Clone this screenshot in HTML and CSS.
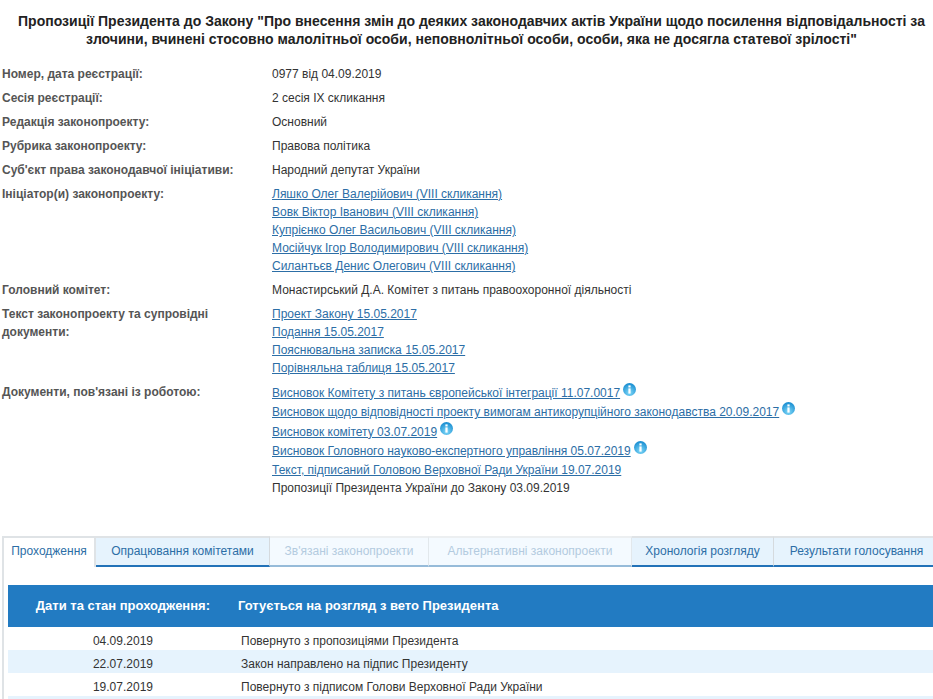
FILE: index.html
```html
<!DOCTYPE html>
<html lang="uk">
<head>
<meta charset="utf-8">
<title>Законопроект 0977</title>
<link rel="stylesheet" href="styles.css">
</head>
<body>
<div class="page">
  <h1 class="title">Пропозиції Президента до Закону "Про внесення змін до деяких законодавчих актів України щодо посилення відповідальності за злочини, вчинені стосовно малолітньої особи, неповнолітньої особи, особи, яка не досягла статевої зрілості"</h1>
  <div class="info">
    <div class="row"><div class="label">Номер, дата реєстрації:</div><div class="value">0977 від 04.09.2019</div></div>
    <div class="row"><div class="label">Сесія реєстрації:</div><div class="value">2 сесія IX скликання</div></div>
    <div class="row"><div class="label">Редакція законопроекту:</div><div class="value">Основний</div></div>
    <div class="row"><div class="label">Рубрика законопроекту:</div><div class="value">Правова політика</div></div>
    <div class="row"><div class="label">Суб'єкт права законодавчої ініціативи:</div><div class="value">Народний депутат України</div></div>
    <div class="row"><div class="label">Ініціатор(и) законопроекту:</div><div class="value">
      <div><a href="#">Ляшко Олег Валерійович (VIII скликання)</a></div>
      <div><a href="#">Вовк Віктор Іванович (VIII скликання)</a></div>
      <div><a href="#">Купрієнко Олег Васильович (VIII скликання)</a></div>
      <div><a href="#">Мосійчук Ігор Володимирович (VIII скликання)</a></div>
      <div><a href="#">Силантьєв Денис Олегович (VIII скликання)</a></div>
    </div></div>
    <div class="row"><div class="label">Головний комітет:</div><div class="value">Монастирський Д.А. Комітет з питань правоохоронної діяльності</div></div>
    <div class="row"><div class="label">Текст законопроекту та супровідні документи:</div><div class="value">
      <div><a href="#">Проект Закону 15.05.2017</a></div>
      <div><a href="#">Подання 15.05.2017</a></div>
      <div><a href="#">Пояснювальна записка 15.05.2017</a></div>
      <div><a href="#">Порівняльна таблиця 15.05.2017</a></div>
    </div></div>
    <div class="row"><div class="label">Документи, пов'язані із роботою:</div><div class="value docs">
      <div class="doc"><a href="#">Висновок Комітету з питань європейської інтеграції 11.07.0017</a><svg class="info-icon" viewBox="0 0 14 14"><use href="#i"/></svg></div>
      <div class="doc"><a href="#">Висновок щодо відповідності проекту вимогам антикорупційного законодавства 20.09.2017</a><svg class="info-icon" viewBox="0 0 14 14"><use href="#i"/></svg></div>
      <div class="doc"><a href="#">Висновок комітету 03.07.2019</a><svg class="info-icon" viewBox="0 0 14 14"><use href="#i"/></svg></div>
      <div class="doc"><a href="#">Висновок Головного науково-експертного управління 05.07.2019</a><svg class="info-icon" viewBox="0 0 14 14"><use href="#i"/></svg></div>
      <div><a href="#">Текст, підписаний Головою Верховної Ради України 19.07.2019</a></div>
      <div>Пропозиції Президента України до Закону 03.09.2019</div>
    </div></div>
  </div>
  <svg class="defs" width="0" height="0"><defs>
    <radialGradient id="g" cx="50%" cy="75%" r="70%"><stop offset="0" stop-color="#7fd8f8"/><stop offset="1" stop-color="#1b8fd2"/></radialGradient>
    <g id="i"><circle cx="7" cy="7" r="7" fill="url(#g)"/><rect x="5.8" y="2.6" width="2.4" height="2.2" fill="#fff"/><rect x="5.8" y="5.8" width="2.4" height="5.6" fill="#fff"/></g>
  </defs></svg>
  <div class="tabs">
    <div class="tab active">Проходження</div>
    <div class="tab t2">Опрацювання комітетами</div>
    <div class="tab t3 disabled">Зв'язані законопроекти</div>
    <div class="tab t4 disabled">Альтернативні законопроекти</div>
    <div class="tab t5">Хронологія розгляду</div>
    <div class="tab t6">Результати голосування</div>
  </div>
  <div class="panel">
    <div class="thead"><div class="c1">Дати та стан проходження:</div><div class="c2">Готується на розгляд з вето Президента</div></div>
    <div class="trow"><div class="d">04.09.2019</div><div class="s">Повернуто з пропозиціями Президента</div></div>
    <div class="trow alt"><div class="d">22.07.2019</div><div class="s">Закон направлено на підпис Президенту</div></div>
    <div class="trow"><div class="d">19.07.2019</div><div class="s">Повернуто з підписом Голови Верховної Ради України</div></div>
    <div class="trow alt"></div>
  </div>
</div>
</body>
</html>
```
FILE: styles.css
```css
html, body { margin: 0; padding: 0; background: #fff; overflow: hidden; height: 699px; }
body { font: 12px/18px "Liberation Sans", Arial, sans-serif; color: #333; }
.page { width: 943px; }
.title { margin: 0; padding: 12px 0 0; font-size: 14px; line-height: 18px; font-weight: bold; text-align: center; color: #222; letter-spacing: 0.01px; }
.info { padding: 17px 0 0 2px; }
.row { display: flex; margin-bottom: 6px; }
.label { width: 270px; padding-right: 30px; box-sizing: border-box; font-weight: bold; color: #555; }
.value { flex: 1; }
a { color: #2c6ea6; text-decoration: underline; }
.docs { padding-top: 0.5px; }
.doc { height: 19.5px; line-height: 18px; }
.doc:nth-child(4) { height: 19px; }
.info-icon { width: 13px; height: 13px; margin: -6px 0 0 3px; vertical-align: 1px; }
.defs { position: absolute; }
.tabs { display: flex; margin: 39px 0 0 2px; height: 31px; box-sizing: border-box; }
.tab { box-sizing: border-box; height: 31px; line-height: 26px; text-align: center; color: #2c6ea6; background: #e6f3fd; border-top: 2px solid #dfe3e6; border-right: 1px solid #d5dade; border-bottom: 2px solid #2272b8; flex: none; }
.tab.active { width: 94px; background: #fff; border-left: 2px solid #dfe3e6; border-right: 2px solid #dfe3e6; border-bottom: 0; }
.t2 { width: 174px; }
.t3 { width: 159px; }
.t4 { width: 203px; }
.t5 { width: 142px; }
.t6 { width: 166px; }
.tab.disabled { color: #b3cbe0; background: #f4faff; border-bottom-color: #96bbd9; border-top-color: #eceff1; border-right-color: #e2e8ec; }
.panel { margin: -2px 0 0 2px; padding: 20px 0 0 4px; border-left: 2px solid #dfe3e6; }
.thead { display: flex; height: 42px; align-items: center; background: #227bc2; color: #fff; font-weight: bold; font-size: 13px; }
.c1 { width: 202px; text-align: right; }
.c2 { padding-left: 28px; }
.trow { display: flex; height: 23px; box-sizing: border-box; padding-top: 5px; line-height: 18px; color: #333; }
.trow.alt { background: #e6f3fd; }
.d { width: 204px; padding-right: 59px; box-sizing: border-box; text-align: right; }
.s { padding-left: 29px; }
```
